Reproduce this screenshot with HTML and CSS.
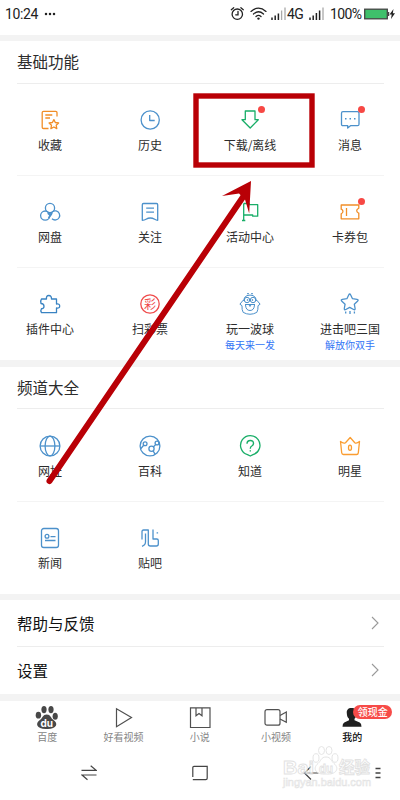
FILE: index.html
```html
<!DOCTYPE html>
<html lang="zh-CN">
<head>
<meta charset="utf-8">
<meta name="viewport" content="width=device-width">
<title>我的</title>
<link rel="stylesheet" href="styles.css">
</head>
<body>
<div class="phone">
  <header class="status">
    <span class="time">10:24</span>
    <svg class="dots" width="12" height="4" viewBox="0 0 12 4"><circle cx="2" cy="2" r="1.25"/><circle cx="6" cy="2" r="1.25"/><circle cx="10" cy="2" r="1.25"/></svg>
    <svg class="signals" width="95" height="18" viewBox="230 5 95 18">
      <g fill="none" stroke="#222" stroke-width="1.3" stroke-linecap="round">
        <circle cx="237.3" cy="14.2" r="5.2"/><path d="M231.3 9.7l2.4-2M243.3 9.7l-2.4-2M238 11.3v3.5h-2.3"/>
        <path d="M251 11.4q7.5-6.5 15 0M253.500 14q5-4.400 10 0M256 16.500q2.500-2.200 5 0"/>
      </g>
      <circle cx="258.500" cy="18.600" r="1.200" fill="#222"/>
      <path d="M272 17.500v2.500M275.200 15.500v4.500M278.400 13.500v6.500M310 17.500v2.500M313.200 15.500v4.500M316.400 13v7M319.600 10.500v9.500" stroke="#222" stroke-width="1.500"/>
      <path d="M281.600 10.500v9.500M285 7.500v12.500M323 7.500v12.500" stroke="#aaa" stroke-width="1.300"/>
      <text x="287" y="19" class="net">4G</text>
    </svg>
    <span class="percent">100%</span>
    <svg class="battery" width="32" height="12" viewBox="0 0 32 12"><rect x=".7" y="1.2" width="22.600" height="9.600" fill="#3fc06b" stroke="#444" stroke-width="1.300"/><path d="M24.500 4v4" stroke="#444" stroke-width="1.500"/><path d="M29.500 1l-4 5.500h2.200L27 11l4-5.800h-2.200z" fill="#222"/></svg>
  </header>

  <section class="panel">
    <h2>基础功能</h2>
    <div class="grid">
      <div class="cell"><svg class="icon orange" viewBox="0 0 24 24"><path d="M10.500 20.500H5.500q-1.300 0-1.300-1.300V4.600q0-1.300 1.300-1.300H17.700q1.300 0 1.300 1.300V8.500M7.300 7h7M7.300 10h4.700M15.900 11.600l1.400 2.900 3.300.5-2.400 2.300.6 3.300-2.900-1.600-3 1.600.6-3.300-2.400-2.300 3.300-.5z"/></svg><span>收藏</span></div>
      <div class="cell"><svg class="icon blue" viewBox="0 0 24 24"><circle cx="12.200" cy="12" r="9.100"/><path d="M11.700 7v5.500h5"/></svg><span>历史</span></div>
      <div class="cell"><svg class="icon green" viewBox="0 0 24 24"><path d="M7.300 3h9.700v8.700h3.300L12.200 20 4 11.700h3.300z"/></svg><i class="dot"></i><span>下载/离线</span></div>
      <div class="cell"><svg class="icon blue" viewBox="0 0 24 24"><path d="M5 3.700h14.500q1.500 0 1.500 1.500v11q0 1.500-1.500 1.500H12.500L9.700 20v-2.300H5q-1.500 0-1.500-1.500v-11Q3.500 3.700 5 3.700z"/><path d="M7 10.700h1.500M11.500 10.700h1.500M16 10.700h1.500" stroke-width="1.500"/></svg><i class="dot"></i><span>消息</span></div>
    </div>
    <div class="grid">
      <div class="cell"><svg class="icon blue" viewBox="0 0 24 24"><circle cx="12" cy="8" r="4.600"/><circle cx="7.200" cy="15.600" r="4.600"/><path d="M12.500 15.600a4.600 4.600 0 1 1 1.500 3.200"/><path d="M9.800 13l2.200 2 2.200-2M10.500 18l3-4" stroke-width="1.700"/></svg><span>网盘</span></div>
      <div class="cell"><svg class="icon blue" viewBox="0 0 24 24"><path d="M5.500 3.500h13q1.200 0 1.200 1.200v15.600q-1.500 0-3-1-4.500-2.600-8.700 0-1.500 1-3.700 1V4.700q0-1.200 1.200-1.200zM8.200 8.200h7.800M8.200 12.200h7.800"/></svg><span>关注</span></div>
      <div class="cell"><svg class="icon green" viewBox="0 0 24 24"><path d="M5.700 3.500v17M4 20.500h3.300M5.700 3.500h5.500v1.200h8.500v11.500h-5V15H5.700"/></svg><span>活动中心</span></div>
      <div class="cell"><svg class="icon orange" viewBox="0 0 24 24"><path d="M3.200 5h17.600v3.200q-3.200 1.800-1.500 4 .4.500 1.500 1v5.600H3.200v-5q2.600-1.500 1.300-3.600-.4-.7-1.300-1zM8.500 8v8"/></svg><i class="dot"></i><span>卡券包</span></div>
    </div>
    <div class="grid last">
      <div class="cell"><svg class="icon blue deep" viewBox="0 0 24 24"><path d="M3.500 7h5q-.5-3.500 2.300-3.500T13.500 7h5v5q3.200-.5 3.200 2t-3.200 2v4.700H3.500q-1.300-2 0-4 2.500 0 2.500-2.500T3 11.500q-.7-3 .5-4.500z"/></svg><span>插件中心</span></div>
      <div class="cell"><svg class="icon red" viewBox="0 0 24 24"><circle cx="12" cy="12" r="9.200"/><text x="6" y="16.500">彩</text></svg><span>扫彩票</span></div>
      <div class="cell"><svg class="icon blue thin" viewBox="0 0 24 24"><path d="M5.500 9Q6 4.500 9 3.600q3-1 6 0 3 .9 3.500 5.400M5.200 8.200l-3.300 4L4 13.700q-.3 4 1.200 6.700 6.800 3.700 13.600 0 1.500-2.700 1.200-6.700l2.100-1.500-3.300-4M9 1.700h2M13 1.700h2"/><circle cx="9" cy="8" r="2.700"/><circle cx="15" cy="8" r="2.700"/><circle cx="9.600" cy="8" r=".5"/><circle cx="14.400" cy="8" r=".5"/><path d="M7 12.500h10M10.500 12l1.500 2.500 1.500-2.500M7.500 13q.4 5.500 4.500 5.500t4.500-5.500"/></svg><span>玩一波球</span><small>每天来一发</small></div>
      <div class="cell"><svg class="icon blue" viewBox="0 0 24 24"><path d="M10.700 3q1-2 2 0l1.800 3.700 4.500.6q2 .5.500 1.900l-3.200 3 .8 4.300q.2 1.800-1.500 1L11.700 15.400l-3.900 2.100q-1.700.8-1.500-1l.8-4.300-3.200-3q-1.500-1.400.5-1.900l4.500-.6zM7.700 19.500v2M12 19v3M16.400 19.500v2"/></svg><span>进击吧三国</span><small>解放你双手</small></div>
    </div>
  </section>

  <section class="panel">
    <h2>频道大全</h2>
    <div class="grid">
      <div class="cell"><svg class="icon blue" viewBox="0 0 24 24"><circle cx="12" cy="12" r="9.900"/><ellipse cx="12" cy="12" rx="4.900" ry="9.900"/><path d="M2 12h20"/></svg><span>网址</span></div>
      <div class="cell"><svg class="icon blue" viewBox="0 0 24 24"><circle cx="12" cy="12" r="9.900"/><circle cx="7.100" cy="9.800" r="1.900"/><circle cx="13.500" cy="14.700" r="2.600"/><circle cx="19" cy="9" r="1.900"/><path d="M2.500 15l3.200-3.700M15.300 13l2.500-2.600M15 16.600l2 3.500"/></svg><span>百科</span></div>
      <div class="cell"><svg class="icon green" viewBox="0 0 24 24"><path d="M9.500 20.600A9.700 9.700 0 1 1 15 20.600L12.300 22z"/><path d="M9 9.700q0-3.200 3.300-3.200t3.200 3q0 1.500-1.700 2.500-1.500.8-1.500 2.700M12.300 16.200v1.300" stroke-width="1.400"/></svg><span>知道</span></div>
      <div class="cell"><svg class="icon amber" viewBox="0 0 24 24"><path d="M2.500 7.500l1.200 11.300q.2 1.700 1.700 1.700h13.200q1.500 0 1.700-1.700L21.500 7.500q-3 2.500-4.700 1.200L12.200 3.500 7.500 8.700Q5.500 10 2.500 7.500z"/><ellipse cx="12" cy="13.700" rx="1.500" ry="2.600"/></svg><span>明星</span></div>
    </div>
    <div class="grid last">
      <div class="cell"><svg class="icon blue" viewBox="0 0 24 24"><rect x="3.500" y="2.500" width="17" height="19" rx="2.300"/><circle cx="9" cy="10.300" r="1.900"/><path d="M12.500 10.700h5M7 14.500h10.500"/></svg><span>新闻</span></div>
      <div class="cell"><svg class="icon blue" viewBox="0 0 24 24"><path d="M4 13.500V5.500q0-1.500 1.500-1.500h4.800v14q0 2 2 2h6q2 0 2-2v-3.500q0-1.500-1.500-1.500H15V3.500M7.500 7.500v8.500q0 3-3.500 4.300M18.600 6.800h1.500"/></svg><span>贴吧</span></div>
    </div>
  </section>

  <section class="panel list">
    <div class="row"><span>帮助与反馈</span><svg class="chev" width="8" height="14" viewBox="0 0 8 14"><path d="M1 1l6 6-6 6"/></svg></div>
    <div class="row"><span>设置</span><svg class="chev" width="8" height="14" viewBox="0 0 8 14"><path d="M1 1l6 6-6 6"/></svg></div>
  </section>

  <footer class="tabs">
    <div class="tab"><svg viewBox="0 0 28 26"><g fill="#484848"><ellipse cx="5.400" cy="11.200" rx="2.700" ry="3.400"/><ellipse cx="11" cy="5.600" rx="2.600" ry="3.600"/><ellipse cx="18" cy="5.600" rx="2.600" ry="3.600"/><ellipse cx="22.200" cy="12.200" rx="2.600" ry="3.500"/><path d="M13.700 10.500c4 0 4 3.500 6.500 5.300 6 4 3 9.700-6.500 9.200-9.500.5-12.500-5.200-6.500-9.200 2.500-1.800 2.500-5.300 6.500-5.300z"/></g><text x="7.500" y="23" class="du">du</text></svg><span>百度</span></div>
    <div class="tab"><svg viewBox="0 0 28 26"><path d="M7.500 4.700v18L22.500 13.500z"/></svg><span>好看视频</span></div>
    <div class="tab"><svg viewBox="0 0 28 26"><path d="M4.500 3.800h19.500v19.700H4.500zM10 3.800v8l3-2.300 3 2.300v-8"/></svg><span>小说</span></div>
    <div class="tab"><svg viewBox="0 0 28 26"><rect x="3" y="5.700" width="15" height="15.500" rx="2"/><path d="M18 11.600l6.300-3.500v10.200L18 15"/></svg><span>小视频</span></div>
    <div class="tab active"><svg viewBox="0 0 28 26"><path d="M13.500 4c3.500 0 5.300 2 5 5.200-.2 3-.8 4.500-2 5.500v1.500l5.200 2.300q1.800.8 1.800 4.200H4.500q0-3.400 1.800-4.200l4.700-2.300v-1.500C9.600 13.700 9 12 8.800 9.200 8.500 6 10 4 13.500 4z" class="person"/></svg><span>我的</span><b class="cash">领现金</b></div>
  </footer>

  <nav class="system">
    <svg viewBox="0 0 16 16"><path d="M.5 5.400h14.700l-5.500-4.600M15.500 10H1l5.500 4.800"/></svg>
    <svg viewBox="0 0 16 16"><path d="M.8 12V2.500q0-1.200 1.200-1.200h13.200v12q0 1.400-1.400 1.400H.8"/></svg>
    <svg viewBox="0 0 16 16"><path d="M15.500 8H1.500l6.500-6.500M1.500 8l6.500 6.500"/></svg>
    <svg class="menu" viewBox="0 0 6 16"><path d="M.5 3.500h5M.5 8h5M.5 12.500h5"/></svg>
  </nav>

  <div class="watermark">
    <svg width="92" height="46" viewBox="280 744 92 46">
      <g class="mark"><ellipse cx="316" cy="758" rx="3" ry="4.300"/><ellipse cx="321.500" cy="750.500" rx="3" ry="4"/><ellipse cx="329" cy="750.500" rx="3" ry="4"/><ellipse cx="335" cy="758" rx="3" ry="4.300"/><path d="M326 757c5 0 5 4 8 6.500 6 5 2 11.500-8 10.500-10 1-14-5.500-8-10.500 3-2.500 3-6.500 8-6.500z"/></g>
      <text x="283" y="774" class="brand" textLength="31" lengthAdjust="spacingAndGlyphs">Bai</text>
      <text x="319" y="772.500" class="brand small" textLength="14" lengthAdjust="spacingAndGlyphs">du</text>
      <text x="339" y="773" class="brand cn">经验</text>
      <text x="283" y="785.500" class="site" textLength="88" lengthAdjust="spacingAndGlyphs">jingyan.baidu.com</text>
    </svg>
  </div>

  <svg class="pointer" width="400" height="800" viewBox="0 0 400 800">
    <rect x="196" y="96" width="116" height="69"/>
    <path d="M49.500 481L243 197" class="shaft"/>
    <path d="M251 181L222 196l17-2.500 6 6 4.200 14z" class="head"/>
  </svg>
</div>
</body>
</html>
```
FILE: styles.css
```css
* { box-sizing: border-box; }

body {
  margin: 0;
  background: #fff;
  color: #2c2c2c;
  font-family: "Noto Sans CJK SC", sans-serif;
}

.phone {
  position: relative;
  width: 400px;
  height: 800px;
  overflow: hidden;
  display: flex;
  flex-direction: column;
}

.status {
  height: 35px;
  flex: none;
  display: flex;
  align-items: center;
  padding: 0 4px 7px 5px;
  font: 14px/18px Roboto, sans-serif;
  color: #222;
}
.time { width: 39px; letter-spacing: -.4px; }
.dots { fill: #222; margin-right: auto; }
.signals { margin-right: 5px; }
.net { font: 14px Roboto, sans-serif; fill: #222; letter-spacing: -.7px; }
.percent { width: 33px; white-space: nowrap; letter-spacing: -.6px; }
.battery { flex: none; margin-left: 1px; }

.panel { flex: none; border-top: 6px solid #f3f3f3; }
.panel + .panel { border-top-width: 7px; }

h2 {
  margin: 0 16px 0 17px;
  height: 43px;
  border-bottom: 1px solid #ededed;
  font-size: 15.5px;
  line-height: 41px;
  font-weight: 400;
}
.panel + .panel h2 { height: 42px; }

.grid {
  position: relative;
  display: grid;
  grid-template-columns: repeat(4, 100px);
  height: 92px;
}
.panel + .panel .grid:not(.last) { height: 93px; }
.panel + .panel .grid .cell { padding-top: 25px; }
.panel + .panel .grid.last .cell { padding-top: 24px; }
.grid:not(.last)::after {
  content: "";
  position: absolute;
  left: 17px;
  right: 16px;
  bottom: 0;
  height: 1px;
  background: #f4f4f4;
}
.cell {
  position: relative;
  display: flex;
  flex-direction: column;
  align-items: center;
  padding-top: 24px;
  font-size: 12px;
}
.cell span { margin-top: 5px; line-height: 16px; }
.cell small { font-size: 10px; line-height: 14px; margin-top: 1px; color: #3275f5; }
.icon {
  width: 24px;
  height: 24px;
  fill: none;
  stroke: currentColor;
  stroke-width: 1.3;
  stroke-linejoin: round;
}
.icon text { font-size: 12px; fill: currentColor; stroke: none; }
.blue { color: #4c91cb; }
.deep { color: #3983c2; }
.thin { stroke-width: 1; }
.green { color: #19ae68; }
.orange { color: #f18e28; }
.amber { color: #fa9d31; }
.red { color: #ef4b4b; }
.dot {
  position: absolute;
  left: 58px;
  top: 22px;
  width: 7px;
  height: 7px;
  border-radius: 50%;
  background: #f74844;
}

.panel.list { border-top-width: 6px; border-bottom: 7px solid #f3f3f3; }
.row {
  margin: 0 16px 0 17px;
  height: 47px;
  display: flex;
  align-items: center;
  justify-content: space-between;
  font-size: 15.5px;
  line-height: 46px;
  color: #111;
}
.row:last-child { padding-bottom: 1px; }
.row:first-child { border-bottom: 1px solid #ededed; }
.chev { margin-right: 5px; fill: none; stroke: #999; stroke-width: 1.1; }

.tabs {
  flex: none;
  height: 44px;
  display: grid;
  grid-template-columns: repeat(5, 76.3px);
  padding-left: 9px;
}
.tab {
  position: relative;
  display: flex;
  flex-direction: column;
  align-items: center;
  font-size: 10px;
  color: #858585;
}
.tab svg { width: 28px; height: 26px; margin-top: 3px; fill: none; stroke: #505050; stroke-width: 1.2; overflow: visible; }
.tab g { stroke: none; }
.tab span { line-height: 14px; }
.tab .du { font: 700 10px/10px Inter, sans-serif; fill: #fff; stroke: none; }
.tab .person { fill: #202020; stroke: none; }
.active { color: #111; font-weight: 500; }
.cash {
  position: absolute;
  left: 39px;
  top: 4px;
  width: 39px;
  height: 14px;
  border-radius: 7px;
  background: #f74b48;
  color: #fff;
  font-size: 10px;
  font-weight: 500;
  line-height: 13px;
  text-align: center;
}

.system {
  flex: 1;
  display: flex;
  align-items: center;
  padding: 0 19px 0 81px;
}
.system svg { width: 16px; height: 16px; margin-right: 95px; fill: none; stroke: #444; stroke-width: 1.2; }
.system svg:nth-child(3) { margin-right: 56px; }
.system .menu { width: 6px; margin: 0; stroke-width: 1.4; }

.watermark { position: absolute; left: 280px; top: 744px; height: 46px; opacity: .75; }
.mark { fill: #fff; stroke: #ddd; stroke-width: 1; }
.brand { font: 700 19px "Liberation Sans", sans-serif; fill: #fff; stroke: #d8d8d8; stroke-width: .9; }
.brand.small { font-size: 13px; }
.brand.cn { font: 700 15.5px "Noto Sans CJK SC", sans-serif; }
.site { font: 10.5px "Liberation Sans", sans-serif; fill: #fff; stroke: #dadada; stroke-width: .6; }

.pointer { position: absolute; left: 0; top: 0; pointer-events: none; }
.pointer rect { fill: none; stroke: #b90006; stroke-width: 5.4; }
.shaft { stroke: #b90006; stroke-width: 6; stroke-linecap: round; }
.head { fill: #b90006; }
```
